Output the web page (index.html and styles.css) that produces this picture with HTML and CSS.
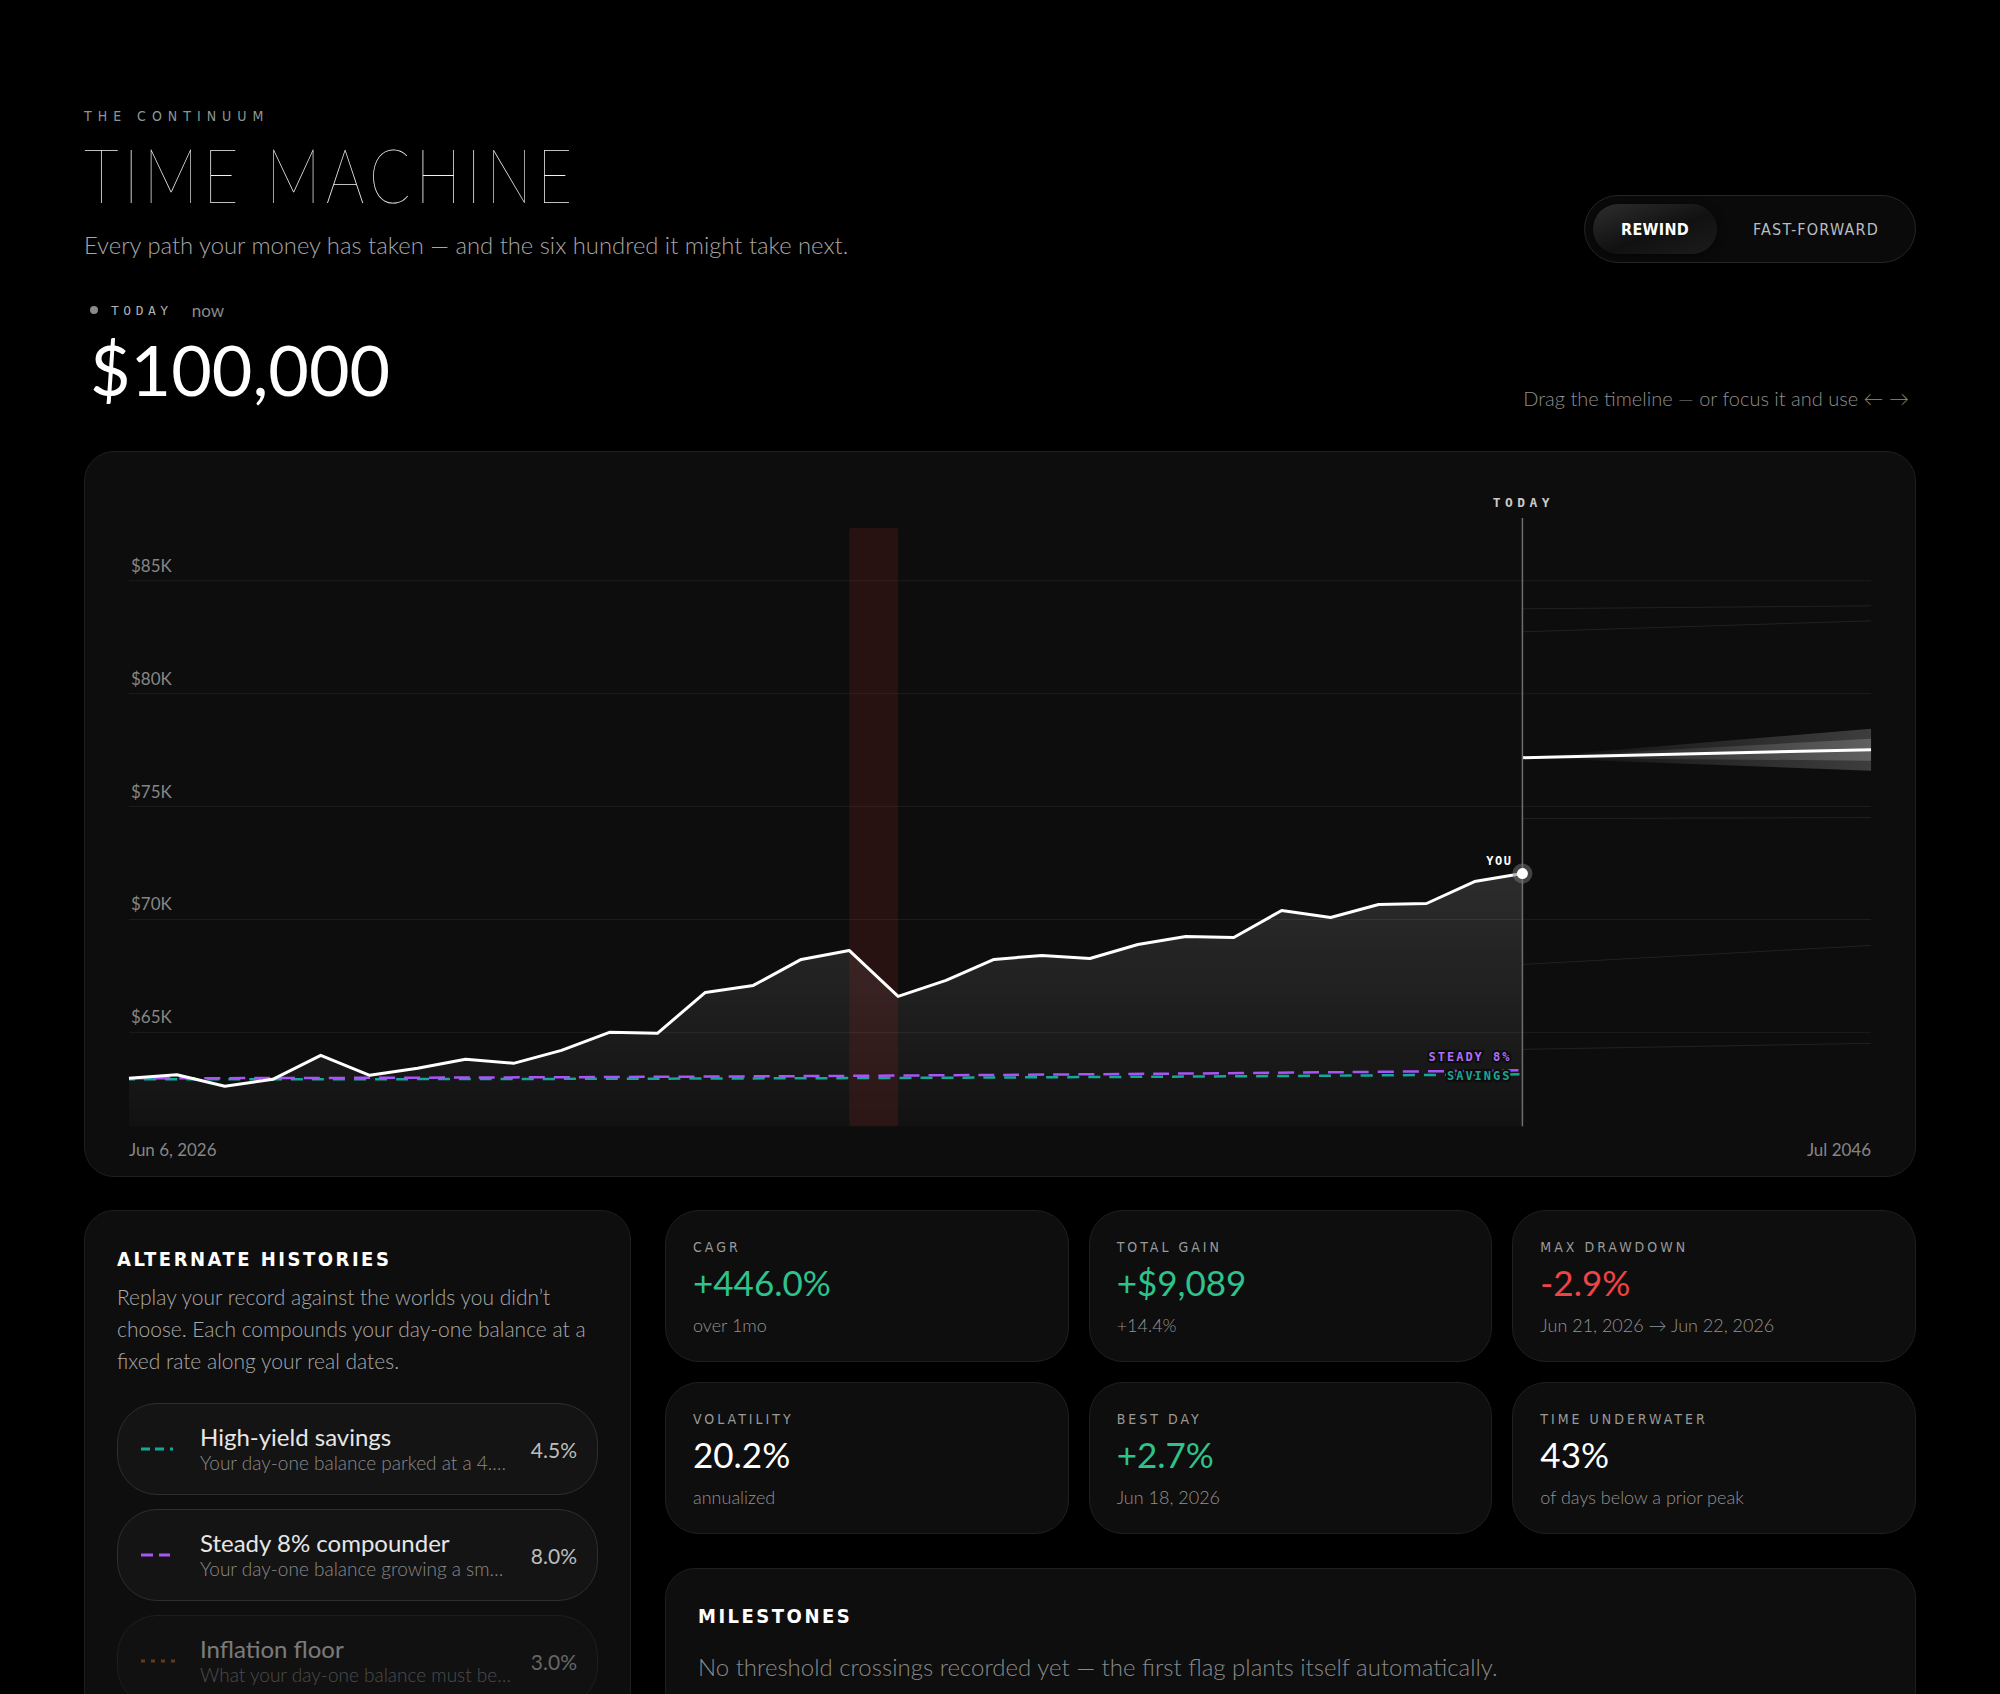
FILE: index.html
```html
<!DOCTYPE html>
<html lang="en">

<head>
    <meta charset="UTF-8" />
    <meta name="viewport" content="width=device-width, initial-scale=1.0" />
    <title>Time Machine</title>
    <link rel="stylesheet" href="styles.css">
</head>

<body>
    <div class="page">
        <header class="hero">
            <div class="hero-text">
                <div class="eyebrow">THE CONTINUUM</div>
                <h1>TIME MACHINE</h1>
                <p class="lede">Every path your money has taken — and the six hundred it might take next.</p>
            </div>
            <div class="mode-toggle">
                <button class="mode active">REWIND</button>
                <button class="mode">FAST-FORWARD</button>
            </div>
        </header>

        <div class="readout-row">
            <div class="readout">
                <div class="readout-label">
                    <span class="dot"></span>
                    <span class="tag">TODAY</span>
                    <span class="when">now</span>
                </div>
                <div class="balance">$100,000</div>
            </div>
            <div class="hint">Drag the timeline — or focus it and use ← →</div>
        </div>

        <section class="chart-card">
            <svg class="chart" viewBox="0 0 1832 725">
                <defs>
                    <linearGradient id="areaFill" x1="0" y1="0" x2="0" y2="1">
                        <stop offset="0" stop-color="#fff" stop-opacity="0.13" />
                        <stop offset="1" stop-color="#fff" stop-opacity="0.02" />
                    </linearGradient>
                    <linearGradient id="fanFill" x1="0" y1="0" x2="1" y2="0">
                        <stop offset="0" stop-color="#fff" stop-opacity="0" />
                        <stop offset="1" stop-color="#fff" stop-opacity="0.2" />
                    </linearGradient>
                </defs>

                <g class="grid">
                    <line x1="44" x2="1788" y1="129" y2="129" />
                    <line x1="44" x2="1788" y1="242" y2="242" />
                    <line x1="44" x2="1788" y1="355" y2="355" />
                    <line x1="44" x2="1788" y1="468" y2="468" />
                    <line x1="44" x2="1788" y1="581" y2="581" />
                </g>
                <g class="axis">
                    <text x="46" y="120">$85K</text>
                    <text x="46" y="233">$80K</text>
                    <text x="46" y="346">$75K</text>
                    <text x="46" y="459">$70K</text>
                    <text x="46" y="572">$65K</text>
                </g>

                <!-- faint forward paths -->
                <g class="paths">
                    <line x1="1439" y1="157" x2="1788" y2="154" />
                    <line x1="1439" y1="180" x2="1788" y2="169" />
                    <line x1="1439" y1="367" x2="1788" y2="366" />
                    <line x1="1439" y1="513" x2="1788" y2="494" />
                    <line x1="1439" y1="598" x2="1788" y2="592" />
                </g>

                <path class="area" d="M44 627 L92 623.5 L140 635 L188 628 L236 604 L285 624 L333 617 L381 608 L429 612 L477 599 L525 581 L573 582 L621 541 L669 534 L717 508 L765 499 L814 545 L862 529 L910 508 L958 504 L1006 507 L1054 493 L1102 485 L1150 486 L1198 459 L1247 466 L1295 453 L1343 452 L1391 430 L1439 422 L1439 675 L44 675 Z" />

                <rect class="crash" x="765" y="76" width="49" height="599" rx="2" />

                <path class="alt-line savings" d="M44 628 Q 800 628 1439 623" />
                <path class="alt-line steady" d="M44 627 Q 800 626 1439 619" />

                <polyline class="real" points="44,627 92,623.5 140,635 188,628 236,604 285,624 333,617 381,608 429,612 477,599 525,581 573,582 621,541 669,534 717,508 765,499 814,545 862,529 910,508 958,504 1006,507 1054,493 1102,485 1150,486 1198,459 1247,466 1295,453 1343,452 1391,430 1439,422" />

                <polygon class="fan outer" points="1439,306 1788,277 1788,319" />
                <polygon class="fan inner" points="1439,306 1788,287 1788,309" />
                <line class="median" x1="1439" y1="306" x2="1788" y2="298" />

                <line class="today-line" x1="1439" y1="66" x2="1439" y2="675" />
                <text class="mono today-tag" x="1440" y="55">TODAY</text>

                <text class="mono alt-tag steady-tag" x="1428" y="610">STEADY 8%</text>
                <text class="mono alt-tag savings-tag" x="1428" y="629">SAVINGS</text>

                <text class="mono you-tag" x="1429" y="413">YOU</text>
                <circle class="halo" cx="1439" cy="422" r="10" />
                <circle class="knob" cx="1439" cy="422" r="5.5" />

                <text class="date" x="44" y="705">Jun 6, 2026</text>
                <text class="date" x="1788" y="705" text-anchor="end">Jul 2046</text>
            </svg>
        </section>

        <div class="lower">
            <aside class="card alt">
                <h2 class="card-title">ALTERNATE HISTORIES</h2>
                <p class="card-desc">Replay your record against the worlds you didn’t choose. Each compounds your day-one balance at a fixed rate along your real dates.</p>
                <div class="alt-list">
                    <div class="alt-row">
                        <svg class="swatch" viewBox="0 0 39 6"><line x1="0" y1="3" x2="39" y2="3" stroke="#14a898" stroke-width="3" stroke-dasharray="9 5 9 6 3 20" /></svg>
                        <div class="alt-text">
                            <div class="alt-name">High-yield savings</div>
                            <div class="alt-note">Your day-one balance parked at a 4.5% high-yield account</div>
                        </div>
                        <div class="alt-rate">4.5%</div>
                    </div>
                    <div class="alt-row">
                        <svg class="swatch" viewBox="0 0 39 6"><line x1="0" y1="3" x2="39" y2="3" stroke="#a855f7" stroke-width="3" stroke-dasharray="12 6 11 20" /></svg>
                        <div class="alt-text">
                            <div class="alt-name">Steady 8% compounder</div>
                            <div class="alt-note">Your day-one balance growing a smooth 8% every year</div>
                        </div>
                        <div class="alt-rate">8.0%</div>
                    </div>
                    <div class="alt-row faded">
                        <svg class="swatch" viewBox="0 0 39 6"><line x1="0" y1="3" x2="39" y2="3" stroke="#b4682a" stroke-width="3" stroke-dasharray="4 6" /></svg>
                        <div class="alt-text">
                            <div class="alt-name">Inflation floor</div>
                            <div class="alt-note">What your day-one balance must be worth to keep pace</div>
                        </div>
                        <div class="alt-rate">3.0%</div>
                    </div>
                </div>
            </aside>

            <div class="right-col">
                <div class="stats">
                    <div class="stat">
                        <div class="stat-label">CAGR</div>
                        <div class="stat-value up">+446.0%</div>
                        <div class="stat-sub">over 1mo</div>
                    </div>
                    <div class="stat">
                        <div class="stat-label">TOTAL GAIN</div>
                        <div class="stat-value up">+$9,089</div>
                        <div class="stat-sub">+14.4%</div>
                    </div>
                    <div class="stat">
                        <div class="stat-label">MAX DRAWDOWN</div>
                        <div class="stat-value down">-2.9%</div>
                        <div class="stat-sub">Jun 21, 2026 → Jun 22, 2026</div>
                    </div>
                    <div class="stat">
                        <div class="stat-label">VOLATILITY</div>
                        <div class="stat-value">20.2%</div>
                        <div class="stat-sub">annualized</div>
                    </div>
                    <div class="stat">
                        <div class="stat-label">BEST DAY</div>
                        <div class="stat-value up">+2.7%</div>
                        <div class="stat-sub">Jun 18, 2026</div>
                    </div>
                    <div class="stat">
                        <div class="stat-label">TIME UNDERWATER</div>
                        <div class="stat-value">43%</div>
                        <div class="stat-sub">of days below a prior peak</div>
                    </div>
                </div>

                <section class="card milestones">
                    <h2 class="card-title">MILESTONES</h2>
                    <p class="empty">No threshold crossings recorded yet — the first flag plants itself automatically.</p>
                </section>
            </div>
        </div>
    </div>
</body>

</html>
```

FILE: styles.css
```css
:root {
    --bg: #000;
    --panel: #0e0e0e;
    --line: #1f1f1f;
    --muted: #8c8c8c;
    --up: #2ec28c;
    --down: #ef4444;
    --narrow: "Liberation Sans Narrow", "DejaVu Sans Condensed", sans-serif;
    --mono: "DejaVu Sans Mono", "Liberation Mono", monospace;
}

* {
    box-sizing: border-box;
}

body {
    margin: 0;
    background: var(--bg);
    color: #ececec;
    font-family: Lato, "Open Sans", sans-serif;
}

.page {
    padding: 107px 84px 0;
}

/* header */
.hero {
    display: flex;
    justify-content: space-between;
    align-items: flex-end;
}

.eyebrow {
    font: 14px/18px var(--narrow);
    letter-spacing: 6px;
    color: #8b9797;
}

h1 {
    margin: 11px 0 0;
    font: 200 76px/1 Lato, sans-serif;
    letter-spacing: 6.5px;
    color: #f2f2f2;
    transform: scaleX(0.8);
    transform-origin: left center;
    white-space: nowrap;
}

.lede {
    margin: 19px 0 0;
    font: 300 23.8px/28px Lato, sans-serif;
    color: #a6a6a6;
}

.mode-toggle {
    display: flex;
    gap: 8px;
    padding: 8px;
    margin-bottom: -4px;
    background: #0a0a0a;
    border: 1px solid #262626;
    border-radius: 34px;
}

.mode {
    height: 50px;
    padding: 0 28px;
    border: 0;
    border-radius: 25px;
    background: transparent;
    color: #b9bdc0;
    font: 16px var(--narrow);
    letter-spacing: 1.2px;
}

.mode.active {
    background: linear-gradient(160deg, #2e2e2e, #111 55%, #1c1c1c);
    color: #fff;
    font-weight: bold;
    letter-spacing: 0.3px;
    box-shadow: 0 2px 8px rgba(0, 0, 0, 0.6);
}

/* today readout */
.readout-row {
    display: flex;
    justify-content: space-between;
    align-items: flex-end;
    margin-top: 41px;
}

.readout-label {
    display: flex;
    align-items: center;
    gap: 13px;
    height: 20px;
    padding-left: 6px;
}

.dot {
    width: 8px;
    height: 8px;
    border-radius: 50%;
    background: #8a8a8a;
}

.tag {
    font: 13px var(--mono);
    letter-spacing: 4.5px;
    color: #b0b0b0;
}

.when {
    font: 17px Lato, sans-serif;
    color: #8a8a8a;
    margin-left: 6px;
}

.balance {
    margin-top: 14px;
    padding-left: 6px;
    font: 70px/1 Lato, sans-serif;
    color: #fff;
}

.hint {
    margin-bottom: -6px;
    padding-right: 7px;
    font: 300 20px/24px Lato, sans-serif;
    color: #8e8e8e;
}

/* chart */
.chart-card {
    margin-top: 47px;
    background: #0d0d0d;
    border: 1px solid var(--line);
    border-radius: 30px;
    overflow: hidden;
}

.chart {
    display: block;
    width: 100%;
    height: auto;
}

.grid line {
    stroke: rgba(255, 255, 255, 0.07);
    stroke-width: 1;
}

.paths line {
    stroke: rgba(255, 255, 255, 0.09);
    stroke-width: 1;
}

.axis text,
.date {
    font: 17px Lato, sans-serif;
    fill: #868686;
}

.area {
    fill: url(#areaFill);
}

.crash {
    fill: rgba(190, 40, 40, 0.15);
}

.real {
    fill: none;
    stroke: #fff;
    stroke-width: 3;
    stroke-linejoin: round;
}

.alt-line {
    fill: none;
    stroke-width: 2.5;
}

.steady {
    stroke: #a855f7;
    stroke-dasharray: 16 9;
}

.savings {
    stroke: #14a898;
    stroke-dasharray: 12 9;
    stroke-dashoffset: 6;
}

.fan.outer {
    fill: url(#fanFill);
}

.fan.inner {
    fill: url(#fanFill);
    opacity: 0.9;
}

.median {
    stroke: #fff;
    stroke-width: 3;
}

.today-line {
    stroke: #6e6e6e;
    stroke-width: 1.5;
}

.mono {
    font-family: var(--mono);
    font-weight: bold;
}

.today-tag {
    font-size: 13px;
    letter-spacing: 4.5px;
    fill: #c9c9c9;
    text-anchor: middle;
}

.alt-tag {
    font-size: 12px;
    letter-spacing: 2px;
    text-anchor: end;
    paint-order: stroke;
    stroke: #0d0d0d;
    stroke-width: 4px;
}

.steady-tag {
    fill: #b26cf5;
}

.savings-tag {
    fill: #1aa594;
}

.you-tag {
    font-size: 12px;
    letter-spacing: 1.5px;
    fill: #fff;
    text-anchor: end;
}

.halo {
    fill: rgba(120, 120, 120, 0.5);
}

.knob {
    fill: #fff;
}

/* lower area */
.lower {
    display: grid;
    grid-template-columns: 547px 1fr;
    gap: 34px;
    margin-top: 33px;
}

.card {
    background: var(--panel);
    border: 1px solid var(--line);
    border-radius: 30px;
}

.card-title {
    margin: 0;
    font: bold 20px/24px var(--narrow);
    letter-spacing: 2.5px;
    color: #fff;
}

.alt {
    padding: 36px 32px 40px;
}

.card-desc {
    margin: 10px 0 0;
    font: 300 21px/32px Lato, sans-serif;
    color: #a9a9a9;
}

.alt-list {
    display: flex;
    flex-direction: column;
    gap: 14px;
    margin-top: 26px;
}

.alt-row {
    display: grid;
    grid-template-columns: 39px 1fr auto;
    align-items: center;
    gap: 18px;
    height: 92px;
    padding: 0 20px 0 23px;
    background: #141414;
    border: 1px solid #2e2e2e;
    border-radius: 40px;
}

.alt-row.faded {
    opacity: 0.5;
}

.swatch {
    width: 39px;
    height: 6px;
}

.alt-text {
    min-width: 0;
    padding-left: 2px;
}

.alt-name {
    font: 24px/28px Lato, sans-serif;
    color: #e6e6e6;
}

.alt-note {
    font: 300 19px/24px Lato, sans-serif;
    color: #8a8a8a;
    white-space: nowrap;
    overflow: hidden;
    text-overflow: ellipsis;
}

.alt-rate {
    font: 21px Lato, sans-serif;
    color: #bdbdbd;
}

.right-col {
    display: flex;
    flex-direction: column;
    gap: 34px;
}

.stats {
    display: grid;
    grid-template-columns: repeat(3, 1fr);
    gap: 20px;
}

.stat {
    padding: 27px 27px 24px;
    background: var(--panel);
    border: 1px solid var(--line);
    border-radius: 34px;
}

.stat-label {
    font: 14px/18px var(--narrow);
    letter-spacing: 3px;
    color: #9a9a9a;
}

.stat-value {
    margin-top: 5px;
    font: 35px/42px Lato, sans-serif;
    color: #fff;
}

.stat-value.up {
    color: var(--up);
}

.stat-value.down {
    color: var(--down);
}

.stat-sub {
    margin-top: 10px;
    font: 300 18px/24px Lato, sans-serif;
    color: #929292;
}

.milestones {
    padding: 35px 32px 40px;
}

.empty {
    margin: 24px 0 0;
    font: 300 24px/30px Lato, sans-serif;
    color: #8a8a8a;
}
```
